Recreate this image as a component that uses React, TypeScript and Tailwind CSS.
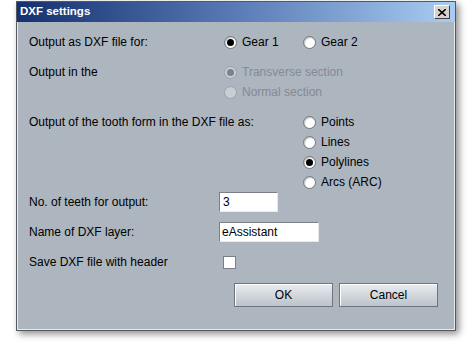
import React from 'react'

type RadioProps = {
  label: string
  checked?: boolean
  disabled?: boolean
}

function Radio({ label, checked, disabled }: RadioProps) {
  return (
    <div className="flex items-center h-5">
      <span
        className={`flex items-center justify-center w-[13px] h-[13px] rounded-full border ${
          disabled
            ? 'border-[#9aa0a8] bg-[#c9ced4]'
            : 'border-[#6f757d] bg-white shadow-[inset_1px_1px_1px_rgba(0,0,0,0.25)]'
        }`}
      >
        {checked && (
          <span
            className={`w-[7px] h-[7px] rounded-full ${
              disabled ? 'bg-[#7d8289]' : 'bg-black'
            }`}
          />
        )}
      </span>
      <span
        className={`ml-[5px] ${disabled ? 'text-[#858b93]' : 'text-black'}`}
      >
        {label}
      </span>
    </div>
  )
}

function Row({
  label,
  children,
  className = '',
}: {
  label?: string
  children?: React.ReactNode
  className?: string
}) {
  return (
    <div className={`flex ${className}`}>
      <div className="w-[190px] shrink-0 h-5 flex items-center whitespace-nowrap">
        {label}
      </div>
      <div className="flex flex-col">{children}</div>
    </div>
  )
}

export default function App() {
  return (
    <div className="w-[470px] h-[345px] bg-white pt-px pl-4">
      <div
        className="w-[440px] h-[330px] border border-[#55595e] bg-[#adb5bf] shadow-[3px_3px_7px_rgba(0,0,0,0.45)] flex flex-col text-[12px] text-black"
        style={{ fontFamily: '"Liberation Sans", Arial, sans-serif' }}
      >
        {/* title bar */}
        <div className="h-5 flex items-center justify-between bg-gradient-to-r from-[#15306e] via-[#5a7bb5] to-[#a9cdf2] pl-[3px] pr-[5px]">
          <span className="text-white font-bold text-[11.5px]">DXF settings</span>
          <button className="w-4 h-[14px] flex items-center justify-center bg-[#d6d3ce] border border-t-white border-l-white border-r-[#404040] border-b-[#404040]">
            <svg width="8" height="7" viewBox="0 0 8 7">
              <path d="M0 0 L8 7 M8 0 L0 7" stroke="black" strokeWidth="1.6" />
            </svg>
          </button>
        </div>

        <div className="border border-[#e6e9ed] border-t-0 flex-1 flex flex-col pl-[11px] pt-[10px]">
          <Row label="Output as DXF file for:">
            <div className="flex pl-[5px]">
              <div className="w-[79px]">
                <Radio label="Gear 1" checked />
              </div>
              <Radio label="Gear 2" />
            </div>
          </Row>

          <Row label="Output in the" className="mt-[10px]">
            <div className="pl-[5px]">
              <Radio label="Transverse section" checked disabled />
              <Radio label="Normal section" disabled />
            </div>
          </Row>

          <Row label="Output of the tooth form in the DXF file as:" className="mt-[10px]">
            <div className="pl-[84px]">
              <Radio label="Points" />
              <Radio label="Lines" />
              <Radio label="Polylines" checked />
              <Radio label="Arcs (ARC)" />
            </div>
          </Row>

          <Row label="No. of teeth for output:">
            <div className="w-[59px] h-5 bg-white border border-t-[#7b8088] border-l-[#7b8088] border-r-[#e8ebee] border-b-[#e8ebee] flex items-center px-[3px]">
              3
            </div>
          </Row>

          <Row label="Name of DXF layer:" className="mt-[10px]">
            <div className="w-[100px] h-5 bg-white border border-t-[#7b8088] border-l-[#7b8088] border-r-[#e8ebee] border-b-[#e8ebee] flex items-center px-[2px]">
              eAssistant
            </div>
          </Row>

          <Row label="Save DXF file with header" className="mt-[10px]">
            <div className="h-5 flex items-center pl-1">
              <span className="w-[13px] h-[13px] bg-white border border-[#7b8088]" />
            </div>
          </Row>

          <div className="flex gap-[6px] mt-[11px] pl-[205px]">
            <button className="w-[99px] h-6 border border-[#6e747c] bg-gradient-to-b from-[#e9ecef] to-[#bcc3cb] shadow-[inset_1px_1px_0_#ffffff]">
              OK
            </button>
            <button className="w-[99px] h-6 border border-[#6e747c] bg-gradient-to-b from-[#e9ecef] to-[#bcc3cb] shadow-[inset_1px_1px_0_#ffffff]">
              Cancel
            </button>
          </div>
        </div>
      </div>
    </div>
  )
}
